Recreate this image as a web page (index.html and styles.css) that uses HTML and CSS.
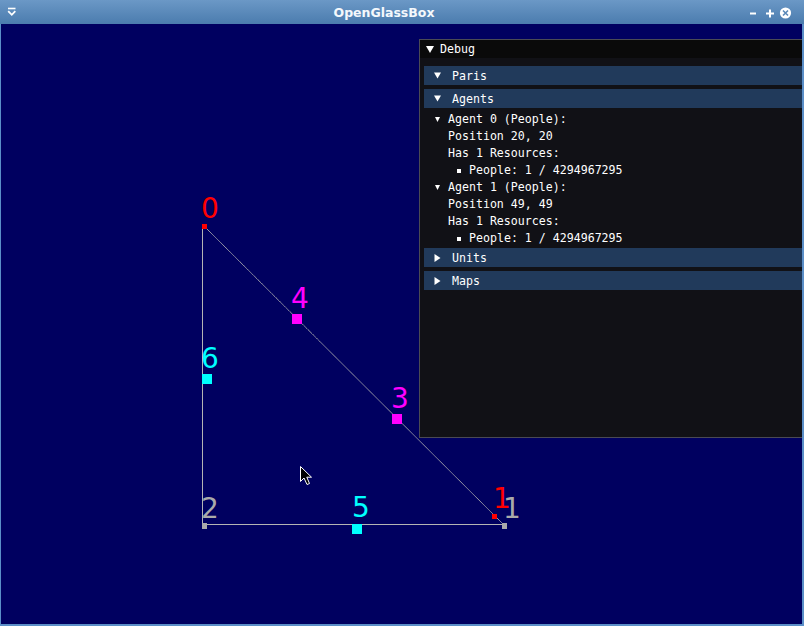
FILE: index.html
```html
<!DOCTYPE html>
<html>
<head>
<meta charset="utf-8">
<title>OpenGlassBox</title>
<link rel="stylesheet" href="styles.css">
</head>
<body>
<div class="window">
  <div class="titlebar">
    <div class="tb-left">
      <svg width="24" height="24" viewBox="0 0 24 24">
        <path d="M8 8.5 H15.5" stroke="#fff" stroke-width="1.6" fill="none"/>
        <path d="M8.2 11.2 L11.8 14.8 L15.3 11.2" stroke="#fff" stroke-width="1.8" fill="none"/>
      </svg>
    </div>
    <div class="tb-title">OpenGlassBox</div>
    <div class="tb-right">
      <svg width="60" height="24" viewBox="744 0 60 24">
        <path d="M750 13.5 H756" stroke="#fff" stroke-width="2" fill="none"/>
        <path d="M766 13.5 H774 M770 9.5 V17.5" stroke="#fff" stroke-width="2" fill="none"/>
        <circle cx="785.5" cy="13" r="5.6" fill="#fff"/>
        <path d="M783 10.5 L788 15.5 M788 10.5 L783 15.5" stroke="#5a88b8" stroke-width="1.6" fill="none"/>
      </svg>
    </div>
  </div>
  <div class="canvas">
    <svg class="scene" width="801" height="600" viewBox="1 24 801 600">
      <g stroke="#b4b4b4" stroke-width="1" fill="none">
        <path d="M202.5 227 V526"/>
        <path d="M202 524.5 H504"/>
        <path d="M206 228 L504 525" stroke-dasharray="1.2 0.3"/>
      </g>
      <rect x="202" y="224" width="5" height="5" fill="#ff0000"/>
      <rect x="492" y="514" width="5" height="5" fill="#ff0000"/>
      <rect x="502" y="523" width="5" height="6" fill="#aaaaaa"/>
      <rect x="202" y="523" width="5" height="6" fill="#aaaaaa"/>
      <rect x="292" y="314" width="10" height="10" fill="#ff00ff"/>
      <rect x="392" y="414" width="10" height="10" fill="#ff00ff"/>
      <rect x="202" y="374" width="10" height="10" fill="#00ffff"/>
      <rect x="352" y="524" width="10" height="10" fill="#00ffff"/>
      <g class="labels">
        <text x="201" y="218" fill="#ff0000">0</text>
        <text x="291" y="308" fill="#ff00ff">4</text>
        <text x="201" y="368" fill="#00ffff">6</text>
        <text x="391" y="408" fill="#ff00ff">3</text>
        <text x="201" y="518" fill="#aaaaaa">2</text>
        <text x="352" y="517" fill="#00ffff">5</text>
        <text x="493" y="508" fill="#ff0000">1</text>
        <text x="503" y="518" fill="#aaaaaa">1</text>
      </g>
      <path d="M300.5 466.5 V481.5 L304 478 L307 484.5 L309.5 483.5 L306.8 477.2 L311.5 477.2 Z" fill="#000" stroke="#fff" stroke-width="1" stroke-linejoin="round"/>
    </svg>

    <div class="debug">
      <div class="dbg-title">
        <svg class="tri-down-l" width="8" height="7" viewBox="0 0 8 7"><path d="M0 0 H8 L4 7 Z" fill="#fff"/></svg>
        <span>Debug</span>
      </div>
      <div class="dbg-body">
        <div class="header">
          <svg class="hdr-arrow" width="7" height="7" viewBox="0 0 7 7"><path d="M0 0.5 H7 L3.5 6.5 Z" fill="#fff"/></svg>
          <span>Paris</span>
        </div>
        <div class="header">
          <svg class="hdr-arrow" width="7" height="7" viewBox="0 0 7 7"><path d="M0 0.5 H7 L3.5 6.5 Z" fill="#fff"/></svg>
          <span>Agents</span>
        </div>
        <div class="row node">
          <svg class="node-arrow" width="5" height="5" viewBox="0 0 5 5"><path d="M0 0 H5 L2.5 5 Z" fill="#fff"/></svg>
          <span>Agent 0 (People):</span>
        </div>
        <div class="row leaf">Position 20, 20</div>
        <div class="row leaf">Has 1 Resources:</div>
        <div class="row bullet"><i class="dot"></i><span>People: 1 / 4294967295</span></div>
        <div class="row node">
          <svg class="node-arrow" width="5" height="5" viewBox="0 0 5 5"><path d="M0 0 H5 L2.5 5 Z" fill="#fff"/></svg>
          <span>Agent 1 (People):</span>
        </div>
        <div class="row leaf">Position 49, 49</div>
        <div class="row leaf">Has 1 Resources:</div>
        <div class="row bullet"><i class="dot"></i><span>People: 1 / 4294967295</span></div>
        <div class="header">
          <svg class="hdr-arrow" width="7" height="8" viewBox="0 0 7 8"><path d="M0.5 0 V8 L6.5 4 Z" fill="#fff"/></svg>
          <span>Units</span>
        </div>
        <div class="header">
          <svg class="hdr-arrow" width="7" height="8" viewBox="0 0 7 8"><path d="M0.5 0 V8 L6.5 4 Z" fill="#fff"/></svg>
          <span>Maps</span>
        </div>
      </div>
    </div>
  </div>
</div>
</body>
</html>
```

FILE: styles.css
```css
html, body {
  margin: 0;
  padding: 0;
  background: #000060;
}

.window {
  width: 804px;
  height: 626px;
  display: flex;
  flex-direction: column;
  overflow: hidden;
}

.titlebar {
  height: 24px;
  flex: none;
  display: flex;
  align-items: stretch;
  background: linear-gradient(#6b98c6, #4b7cae);
  color: #fff;
}

.tb-left {
  width: 24px;
  flex: none;
}

.tb-left svg,
.tb-right svg {
  display: block;
}

.tb-title {
  flex: 1;
  text-align: center;
  font-family: "DejaVu Sans", sans-serif;
  font-weight: bold;
  font-size: 12.5px;
  line-height: 25px;
  color: #f4f8fc;
}

.tb-right {
  width: 60px;
  flex: none;
}

.canvas {
  flex: 1;
  position: relative;
  overflow: hidden;
  background: #000060;
  border-left: 1px solid #5b8fc8;
  border-right: 2px solid #5b8fc8;
  border-bottom: 2px solid #5b8fc8;
}

.scene {
  display: block;
}

.labels text {
  font-family: "DejaVu Sans", sans-serif;
  font-size: 28px;
}

.debug {
  position: absolute;
  left: 418px;
  top: 15px;
  width: 420px;
  height: 397px;
  border: 1px solid #4a4a54;
  background: #111116;
  font-family: "DejaVu Sans Mono", monospace;
  font-size: 11.6px;
  color: #fff;
  display: flex;
  flex-direction: column;
}

.dbg-title {
  height: 18px;
  flex: none;
  background: #0a0a0a;
  display: flex;
  align-items: center;
  padding-left: 6px;
  gap: 6px;
}

.dbg-body {
  padding-top: 8px;
  display: flex;
  flex-direction: column;
  gap: 4px;
}

.header {
  margin-left: 4px;
  height: 19px;
  background: #213a5b;
  display: flex;
  align-items: center;
  padding-left: 10px;
  gap: 11px;
}

.header svg,
.dbg-title svg,
.row svg {
  display: block;
  flex: none;
}

.row {
  box-sizing: border-box;
  height: 13px;
  padding-top: 2px;
  line-height: 13px;
  display: flex;
  align-items: center;
  white-space: pre;
}

.node {
  padding-left: 15px;
  gap: 8px;
}

.leaf {
  padding-left: 28px;
}

.bullet {
  padding-left: 37px;
  gap: 8px;
}

.dot {
  display: block;
  width: 4px;
  height: 4px;
  background: #fff;
  flex: none;
}
```
